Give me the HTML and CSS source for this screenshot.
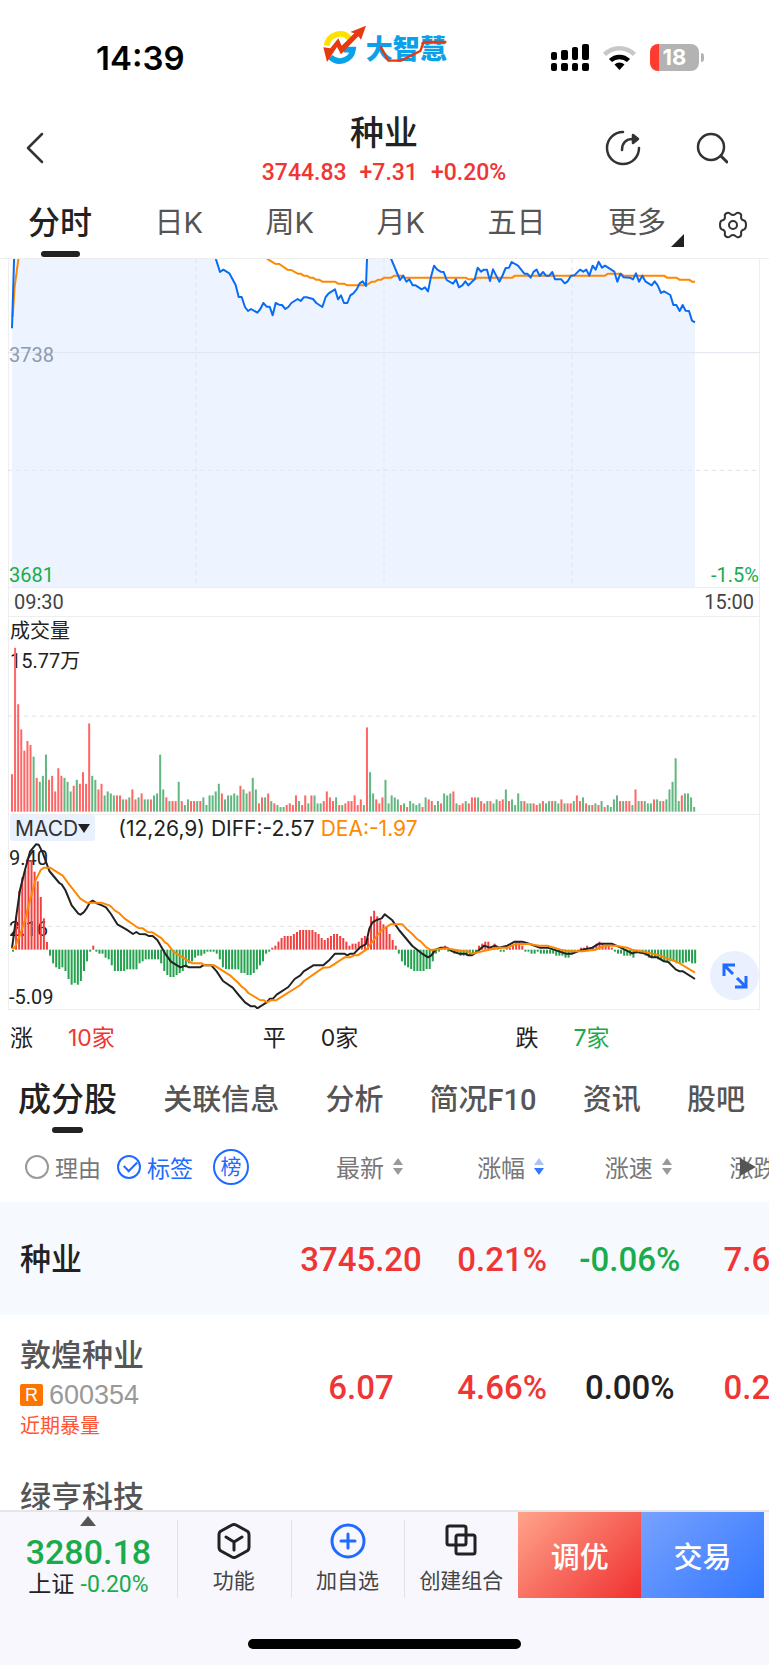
FILE: index.html
```html
<!DOCTYPE html>
<html lang="zh-CN">
<head>
  <meta charset="UTF-8">
  <meta name="viewport" content="width=device-width, initial-scale=1.0">
  <title>种业</title>
  <link rel="stylesheet" href="styles.css">
</head>
<body>
  <div class="app">
    <div class="status">
      <div class="status-time">14:39</div>
      <svg class="logo" viewBox="66 46 372 120" role="img" aria-label="大智慧">
        <path d="M77 108A40 40 0 0 1 146 86" fill="none" stroke="#ffe100" stroke-width="17"/>
        <path d="M88 142A40 40 0 0 0 156 120H128" fill="none" stroke="#0aa0ea" stroke-width="17"/>
        <path d="M67 113L88 116L112 86L122 108L160 71L148 67L195 48L180 90L172 80L120 134L108 112L78 157Z" fill="#e8380d"/>
        <text x="194" y="149" class="logo-text">大智慧</text>
        <path d="M238 110L262 153H300L358 124L368 97H436" fill="none" stroke="#e8380d" stroke-width="7"/>
      </svg>
      <div class="status-icons">
        <svg width="38" height="27" viewBox="0 0 38 27">
          <rect x="0" y="8" width="6" height="8" rx="2"/><rect x="10" y="6" width="7" height="10" rx="2"/>
          <rect x="21" y="3" width="6" height="13" rx="2"/><rect x="31" y="0" width="7" height="16" rx="2"/>
          <rect x="0" y="19" width="6" height="8" rx="2"/><rect x="10" y="19" width="7" height="8" rx="2"/>
          <rect x="21" y="19" width="6" height="8" rx="2"/><rect x="31" y="19" width="7" height="8" rx="2"/>
        </svg>
        <svg width="33" height="25" viewBox="0 0 33 25" fill="none" stroke-width="4.5">
          <path d="M1.500 9.500A21 21 0 0 1 31.500 9.500" stroke="#c8c8c8"/>
          <path d="M7.500 15.500A13 13 0 0 1 25.500 15.500" stroke="#000"/>
          <path d="M16.500 25L11.500 19.500A7.500 7.500 0 0 1 21.500 19.500Z" fill="#000"/>
        </svg>
        <div class="battery">18</div>
      </div>
    </div>

    <header class="header">
      <button class="icon-btn" aria-label="返回">
        <svg width="18" height="32" viewBox="0 0 18 32"><path d="M16 2L2 16L16 30"/></svg>
      </button>
      <div class="title">
        <h1>种业</h1>
        <div class="quote"><span>3744.83</span><span>+7.31</span><span>+0.20%</span></div>
      </div>
      <div class="header-actions">
        <button class="icon-btn" aria-label="分享">
          <svg width="36" height="36" viewBox="0 0 36 36">
            <path d="M18 2A16 16 0 1 0 34 18M17 20C17 13 21 9 28 9"/>
            <path d="M28 5L33 9L28 13Z" fill="#333"/>
          </svg>
        </button>
        <button class="icon-btn" aria-label="搜索">
          <svg width="32" height="32" viewBox="0 0 32 32"><circle cx="15" cy="15" r="13"/><path d="M25 24L31 30" stroke-width="3"/></svg>
        </button>
      </div>
    </header>

    <nav class="periods">
      <div class="period-list">
        <button class="period active">分时</button>
        <button class="period">日K</button>
        <button class="period">周K</button>
        <button class="period">月K</button>
        <button class="period">五日</button>
        <button class="period more">更多</button>
      </div>
      <button class="icon-btn" aria-label="设置">
        <svg class="gear" width="28" height="28" viewBox="0 0 28 28">
          <circle cx="14" cy="14" r="4"/>
          <path d="M8 2Q10 1 11.500 3Q14 5 16.500 3Q18 1 20 2Q23 3 22 6Q22 9 25 9.500Q27 10 27 14Q27 18 25 18.500Q22 19 22 22Q23 25 20 26Q18 27 16.500 25Q14 23 11.500 25Q10 27 8 26Q5 25 6 22Q6 19 3 18.500Q1 18 1 14Q1 10 3 9.500Q6 9 6 6Q5 3 8 2Z"/>
        </svg>
      </button>
    </nav>

    <main class="content">
      <section class="charts">
        <div class="chart price">
          <svg viewBox="24 27 2256 984" preserveAspectRatio="none" id="priceChart"></svg>
          <span class="label mid">3738</span>
          <span class="label low green">3681</span>
          <span class="label low right green">-1.5%</span>
        </div>
        <div class="times"><span>09:30</span><span>15:00</span></div>
        <div class="chart volume">
          <div class="volume-head"><div>成交量</div><div>15.77万</div></div>
          <svg viewBox="24 18 2256 594" preserveAspectRatio="none" id="volumeChart"></svg>
        </div>
        <div class="macd-head">
          <button class="indicator">MACD<i></i></button>
          <span>(12,26,9) DIFF:-2.57 <span class="orange">DEA:-1.97</span></span>
        </div>
        <div class="chart macd">
          <span class="label m-top">9.40</span>
          <span class="label m-mid">2.16</span>
          <span class="label m-low">-5.09</span>
          <svg viewBox="24 96 2256 501" preserveAspectRatio="none" id="macdChart"></svg>
          <button class="expand" aria-label="全屏">
            <svg width="26" height="26" viewBox="0 0 26 26"><path d="M11 11L2 2M2 13V2H13M15 15L24 24M24 13V24H13"/></svg>
          </button>
        </div>
      </section>

      <section class="counts">
        <div>涨<span class="red">10家</span></div>
        <div>平<span>0家</span></div>
        <div>跌<span class="green">7家</span></div>
      </section>

      <nav class="tabs">
        <a href="#" class="active">成分股</a>
        <a href="#">关联信息</a>
        <a href="#">分析</a>
        <a href="#">简况F10</a>
        <a href="#">资讯</a>
        <a href="#">股吧</a>
      </nav>

      <table class="stocks">
        <colgroup><col class="c-name"><col class="c-last"><col class="c-pct"><col class="c-speed"><col></colgroup>
        <thead>
          <tr>
            <th>
              <div class="filters">
                <label><input type="checkbox">理由</label>
                <label class="on"><input type="checkbox" checked>标签</label>
                <button class="rank">榜</button>
              </div>
            </th>
            <th><button class="sort">最新<i></i></button></th>
            <th><button class="sort desc">涨幅<i></i></button></th>
            <th><button class="sort">涨速<i></i></button></th>
            <th class="last"><button class="sort">涨跌</button><span class="next"></span></th>
          </tr>
        </thead>
        <tbody>
          <tr class="sector">
            <td class="name">种业</td>
            <td class="red">3745.20</td>
            <td class="red">0.21%</td>
            <td class="green">-0.06%</td>
            <td class="last red">7.6</td>
          </tr>
          <tr>
            <td class="name">
              敦煌种业
              <div class="code"><b>R</b>600354</div>
              <div class="tag">近期暴量</div>
            </td>
            <td class="red">6.07</td>
            <td class="red">4.66%</td>
            <td>0.00%</td>
            <td class="last red">0.2</td>
          </tr>
          <tr>
            <td class="name">
              绿亨科技
              <div class="code"></div>
              <div class="tag"></div>
            </td>
            <td></td>
            <td></td>
            <td></td>
            <td></td>
          </tr>
        </tbody>
      </table>
    </main>

    <footer class="footer">
      <div class="bar">
        <button class="index">
          <i class="up"></i>
          <strong>3280.18</strong>
          <span>上证 <em>-0.20%</em></span>
        </button>
        <button class="tool">
          <svg width="36" height="36" viewBox="0 0 36 36"><path d="M16 2Q18 1 20 2L31 8Q33 9 33 12V24Q33 27 31 28L20 34Q18 35 16 34L5 28Q3 27 3 24V12Q3 9 5 8ZM10 14L18 19L26 14M18 19V27"/></svg>
          功能
        </button>
        <button class="tool">
          <svg class="blue" width="36" height="36" viewBox="0 0 36 36"><circle cx="18" cy="18" r="16"/><path d="M18 11V25M11 18H25"/></svg>
          加自选
        </button>
        <button class="tool">
          <svg width="36" height="36" viewBox="0 0 36 36"><rect x="4" y="3" width="19" height="19" rx="2"/><rect x="13" y="12" width="19" height="19" rx="2"/></svg>
          创建组合
        </button>
        <button class="cta tune">调优</button>
        <button class="cta trade">交易</button>
      </div>
      <div class="home"></div>
    </footer>
  </div>
  <script src="charts.js"></script>
</body>
</html>
```

FILE: styles.css
```css
* {
  box-sizing: border-box;
}
body {
  margin: 0;
  background: #fff;
  color: #222;
  font-family: "Inter", "Noto Sans CJK SC", sans-serif;
}
button {
  margin: 0;
  padding: 0;
  border: 0;
  background: none;
  color: inherit;
  font: inherit;
}
a {
  color: inherit;
  text-decoration: none;
}
svg {
  display: block;
}
.red {
  color: #f03535;
}
.green {
  color: #1aab4b;
}
.orange {
  color: #ff8800;
}
.app {
  display: flex;
  flex-direction: column;
  height: 100vh;
  overflow: hidden;
}

/* status bar */
.status {
  display: grid;
  grid-template-columns: 1fr auto 1fr;
  flex: none;
  height: 100px;
  padding: 25px 64px 0 96px;
}
.status-time {
  padding-top: 13px;
  color: #000;
  font-size: 33px;
  line-height: 40px;
  font-weight: 600;
}
.logo {
  width: 124px;
  height: 40px;
  margin-right: 32px;
}
.logo-text {
  fill: #0aa0ea;
  font-size: 81px;
  font-weight: 900;
}
.status-icons {
  display: flex;
  align-items: center;
  justify-content: flex-end;
  gap: 14px;
  height: 64px;
}
.battery {
  position: relative;
  width: 49px;
  height: 27px;
  margin-right: 6px;
  border-radius: 8px;
  background: linear-gradient(90deg, #ff3b30 9px, #b3b3b3 9px);
  color: #fff;
  font-size: 22px;
  line-height: 27px;
  font-weight: 700;
  text-align: center;
}
.battery::after {
  content: "";
  position: absolute;
  top: 9px;
  right: -5px;
  width: 3px;
  height: 9px;
  border-radius: 0 3px 3px 0;
  background: #b3b3b3;
}

/* header */
.header {
  display: grid;
  grid-template-columns: 1fr auto 1fr;
  align-items: center;
  flex: none;
  height: 96px;
  padding: 0 41px 0 26px;
}
.icon-btn svg {
  fill: none;
  stroke: #333;
  stroke-width: 2.5;
  stroke-linecap: round;
  stroke-linejoin: round;
}
.icon-btn .gear {
  stroke-width: 2;
}
.title {
  padding: 9px 0 0 14px;
  text-align: center;
}
.title h1 {
  margin: 0;
  font-size: 34px;
  line-height: 40px;
  font-weight: 500;
}
.quote {
  display: flex;
  gap: 13px;
  color: #f03535;
  font-family: Roboto, sans-serif;
  font-size: 23px;
  line-height: 40px;
  font-weight: 500;
}
.header-actions {
  display: flex;
  justify-content: flex-end;
  gap: 55px;
}

/* periods */
.periods {
  display: flex;
  align-items: center;
  flex: none;
  gap: 53px;
  height: 63px;
  padding: 0 22px 0 28px;
  border-bottom: 1px solid #eee;
}
.periods .icon-btn {
  padding-bottom: 4px;
}
.period-list {
  display: flex;
  flex: 1;
  justify-content: space-between;
}
.period {
  position: relative;
  height: 62px;
  padding-bottom: 8px;
  color: #555;
  font-size: 29px;
  line-height: 54px;
}
.period.active {
  color: #222;
  font-size: 32px;
  font-weight: 500;
}
.period.active::after {
  content: "";
  position: absolute;
  bottom: 1px;
  left: 13px;
  width: 39px;
  height: 6px;
  border-radius: 3px;
  background: #222;
}
.period.more::after {
  content: "";
  position: absolute;
  right: -18px;
  bottom: 11px;
  border-left: 13px solid transparent;
  border-bottom: 13px solid #222;
}

/* charts */
.content {
  flex: 1;
  min-height: 0;
  overflow: hidden;
}
.charts {
  margin: 0 9px 0 8px;
  border: 1px solid #eee;
  border-top: 0;
}
.chart {
  position: relative;
  border-bottom: 1px solid #eee;
}
.chart > svg {
  position: relative;
  width: calc(100% + 2px);
  height: 100%;
  margin-left: -1px;
}
.price {
  height: 329px;
}
.volume {
  height: 198px;
}
.macd {
  height: 167px;
  border-bottom: 0;
}
.label {
  position: absolute;
  left: 0;
  font-family: Roboto, sans-serif;
  font-size: 20px;
  line-height: 24px;
}
.mid {
  top: 84px;
  color: #8c9bb0;
}
.low {
  bottom: 0;
}
.right {
  left: auto;
  right: 0;
}
.times {
  display: flex;
  justify-content: space-between;
  padding: 0 5px;
  border-bottom: 1px solid #eee;
  color: #444;
  font-family: Roboto, sans-serif;
  font-size: 20px;
  line-height: 28px;
}
.volume-head {
  position: absolute;
  top: -1px;
  left: 1px;
  font-family: Roboto, "Noto Sans CJK SC", sans-serif;
  font-size: 20px;
  line-height: 30px;
}
.macd-head {
  display: flex;
  gap: 23px;
  height: 27px;
  padding-left: 1px;
  font-size: 21px;
  line-height: 27px;
}
.indicator {
  display: flex;
  align-items: center;
  height: 26px;
  padding: 0 5px;
  border-radius: 3px;
  background: #e9f0fe;
  color: #333;
}
.indicator i {
  border: 6px solid transparent;
  border-top: 9px solid #222;
  border-bottom: 0;
}
.m-top {
  top: 4px;
}
.m-mid {
  top: 75px;
}
.m-low {
  bottom: 0;
}
.expand {
  position: absolute;
  right: 0;
  bottom: 9px;
  display: grid;
  place-items: center;
  width: 49px;
  height: 49px;
  border-radius: 50%;
  background: #eaf0fe;
}
.expand svg {
  fill: none;
  stroke: #1f6bff;
  stroke-width: 3;
}

/* rise / flat / fall */
.counts {
  display: flex;
  padding-left: 10px;
  font-size: 23px;
  line-height: 56px;
}
.counts div {
  display: flex;
  gap: 35px;
  width: 33.3%;
}

/* tabs */
.tabs {
  display: flex;
  align-items: center;
  justify-content: space-between;
  height: 68px;
  padding: 0 24px 0 18px;
  color: #555;
  font-family: Roboto, "Noto Sans CJK SC", sans-serif;
  font-size: 29px;
  line-height: 68px;
  font-weight: 500;
}
.tabs .active {
  position: relative;
  color: #222;
  font-size: 33px;
}
.tabs .active::after {
  content: "";
  position: absolute;
  bottom: 1px;
  left: 34px;
  width: 31px;
  height: 6px;
  border-radius: 3px;
  background: #222;
}

/* stocks */
.stocks {
  width: 100%;
  border-collapse: collapse;
  table-layout: fixed;
}
.c-name {
  width: 37.7%;
}
.c-last {
  width: 18.5%;
}
.c-pct {
  width: 18.2%;
}
.c-speed {
  width: 15%;
}
.stocks th {
  height: 68px;
  padding: 0 0 3px 17px;
  color: #777;
  font-size: 24px;
  font-weight: 400;
  white-space: nowrap;
}
.stocks th:first-child {
  padding-left: 25px;
}
.filters {
  display: flex;
  align-items: center;
  font-size: 23px;
}
.filters label {
  display: flex;
  align-items: center;
  gap: 6px;
  margin-right: 16px;
}
.filters input {
  position: relative;
  width: 24px;
  height: 24px;
  margin: 0;
  border: 2px solid #999;
  border-radius: 50%;
  appearance: none;
}
.filters .on {
  margin-right: 20px;
  color: #1f6bff;
}
.filters input:checked {
  border-color: #1f6bff;
}
.filters input:checked::after {
  content: "";
  position: absolute;
  top: 4px;
  left: 5px;
  width: 11px;
  height: 6px;
  border: solid #1f6bff;
  border-width: 0 0 2px 2px;
  transform: rotate(-45deg);
}
.rank {
  width: 36px;
  height: 36px;
  border: 2px solid #1f6bff;
  border-radius: 50%;
  color: #1f6bff;
  font-size: 21px;
  line-height: 30px;
}
.sort {
  display: inline-flex;
  align-items: center;
  gap: 9px;
}
.sort i::before,
.sort i::after {
  content: "";
  display: block;
  border: 5px solid transparent;
}
.sort i::before {
  border-top: 0;
  border-bottom: 7px solid #999;
  margin-bottom: 3px;
}
.sort i::after {
  border-top: 7px solid #999;
  border-bottom: 0;
}
.sort.desc i::before {
  border-bottom-color: #a9c3f5;
}
.sort.desc i::after {
  border-top-color: #2f78ff;
}
.stocks th.last {
  position: relative;
  padding-left: 42px;
  overflow: hidden;
  text-align: left;
}
.next {
  position: absolute;
  top: 24px;
  left: 53px;
  border: 9px solid transparent;
  border-left: 16px solid #555;
  border-right: 0;
}
.stocks td {
  height: 142px;
  padding: 2px 0 0;
  font-family: Roboto, sans-serif;
  font-size: 33px;
  font-weight: 500;
  text-align: center;
}
.stocks .sector td {
  height: 113px;
  background: #f6faff;
}
.stocks td.last {
  padding-left: 36px;
  overflow: hidden;
  text-align: left;
}
.stocks td.name {
  padding: 0 0 0 20px;
  color: #555;
  font-family: "Inter", "Noto Sans CJK SC", sans-serif;
  font-size: 31px;
  line-height: 42px;
  text-align: left;
}
.stocks .sector td.name {
  color: #222;
}
.code {
  display: flex;
  align-items: center;
  gap: 6px;
  height: 38px;
  color: #999;
  font-family: "Liberation Sans", sans-serif;
  font-size: 27px;
  font-weight: 400;
}
.code b {
  width: 23px;
  height: 22px;
  border-radius: 2px;
  background: #ff7300;
  color: #fff;
  font-size: 18px;
  line-height: 22px;
  font-weight: 400;
  text-align: center;
}
.tag {
  height: 24px;
  color: #ff5533;
  font-size: 20px;
  line-height: 24px;
  font-weight: 400;
}

/* footer */
.footer {
  flex: none;
  height: 155px;
  border-top: 2px solid #e6e6e6;
  background: #f7f7fd;
}
.bar {
  display: flex;
  height: 86px;
  margin-right: 5px;
}
.index {
  display: flex;
  flex: 177;
  flex-direction: column;
  align-items: center;
  font-size: 23px;
  line-height: 28px;
}
.index .up {
  margin-top: 4px;
  border: 8px solid transparent;
  border-top: 0;
  border-bottom: 10px solid #555;
}
.index strong {
  margin-top: 8px;
  color: #1aab4b;
  font-family: Roboto, sans-serif;
  font-size: 34px;
  line-height: 36px;
  font-weight: 500;
}
.index em {
  color: #1aab4b;
  font-family: Roboto, sans-serif;
  font-size: 23px;
  font-style: normal;
}
.tool {
  position: relative;
  display: flex;
  flex: 114;
  flex-direction: column;
  align-items: center;
  gap: 5px;
  padding-top: 11px;
  color: #444;
  font-size: 21px;
  line-height: 34px;
  white-space: nowrap;
}
.tool::before {
  content: "";
  position: absolute;
  top: 8px;
  bottom: 0;
  left: 0;
  width: 1px;
  background: #e2e2e6;
}
.tool svg {
  fill: none;
  stroke: #222;
  stroke-width: 3;
  stroke-linecap: round;
  stroke-linejoin: round;
}
.tool svg.blue {
  stroke: #1f6bff;
}
.cta {
  flex: 123;
  color: #fff;
  font-size: 29px;
  font-weight: 500;
}
.tune {
  background: linear-gradient(135deg, #ffa48b, #f03030);
}
.trade {
  background: linear-gradient(135deg, #78a2ff, #3377ff);
}
.home {
  width: 273px;
  height: 10px;
  margin: 41px auto 0;
  border-radius: 5px;
  background: #000;
}

/* chart marks */
.grid {
  fill: none;
  stroke: #dfe4ee;
  stroke-width: 1;
  vector-effect: non-scaling-stroke;
}
.dash {
  stroke-dasharray: 4 4;
}
.line {
  fill: none;
  stroke-width: 2;
  stroke-linejoin: round;
  vector-effect: non-scaling-stroke;
}
.line.price-line {
  stroke: #0a6cf5;
}
.line.avg {
  stroke: #ff8800;
}
.line.diff {
  stroke: #222;
}
.area {
  fill: #eef4ff;
}
.bar-up {
  fill: #ff6666;
}
.bar-down {
  fill: #62b67f;
}
.hist-up {
  fill: #f24040;
}
.hist-down {
  fill: #22a24c;
}
```

FILE: charts.js
```js
const STEP = 9.26;

const price = '36,235 43,0 640,0 648,28 660,66 670,59 688,70 707,105 716,141 725,141 735,171 744,183 753,177 772,188 781,177 790,159 800,170 809,170 818,196 827,159 837,164 846,165 856,177 865,171 874,159 893,147 902,153 911,142 920,142 939,147 949,159 967,171 977,141 986,130 1005,118 1014,148 1023,136 1032,159 1042,159 1051,136 1060,130 1070,118 1079,100 1088,94 1098,108 1102,0 1160,0 1174,28 1200,90 1210,77 1219,95 1228,88 1238,106 1247,106 1265,118 1275,112 1284,124 1293,80 1302,47 1312,59 1322,65 1331,66 1340,90 1359,101 1368,88 1377,112 1387,106 1396,94 1405,106 1424,88 1433,53 1443,65 1452,59 1461,59 1470,93 1479,58 1498,95 1507,78 1517,54 1527,53 1535,36 1554,47 1573,71 1582,71 1592,83 1601,65 1610,59 1619,78 1629,66 1638,77 1648,77 1657,66 1665,88 1684,88 1694,100 1703,94 1713,77 1723,76 1740,59 1750,65 1759,59 1768,77 1778,47 1787,59 1796,35 1806,53 1815,47 1843,65 1852,95 1861,71 1871,82 1890,83 1899,88 1908,70 1917,95 1927,77 1936,94 1955,106 1964,94 1973,106 1983,129 1992,124 2011,135 2020,165 2029,165 2039,183 2048,165 2057,182 2067,183 2076,212 2085,217';
const average = '38,200 44,110 55,28 60,0 770,0 804,28 825,41 838,42 862,59 874,60 893,71 902,71 911,77 920,77 930,83 939,83 948,89 957,89 967,95 1005,95 1014,101 1032,101 1042,106 1098,106 1116,95 1125,95 1135,89 1144,89 1153,83 1174,83 1183,77 1207,77 1212,83 1397,83 1405,88 1424,88 1433,83 1537,83 1545,77 1815,77 1824,71 1862,71 1871,77 1992,77 2001,83 2029,83 2038,89 2067,89 2076,95 2085,95';

// positive = rise, negative = fall
const volumes = [
  113, 494, 324, 248, 184, 213, 201, -166, 102, -90, -108, -172, 96, 108, 61, 131, 108, -102, -90, -61,
  78, -96, 84, 119, 84, 266, -108, -96, 67, 84, -49, -61, -55, -49, 49, 49, -37, 37, -43, 67,
  37, -43, 55, -37, -37, 37, -49, -55, -172, -67, 43, -32, 32, 32, -90, 32, -20, -37, 32, 32,
  -32, 32, -43, -20, -49, -49, -61, -84, 55, -37, -49, -49, -55, -49, 78, -67, -55, 61, -102, -67,
  25, 43, -43, 55, -32, 25, -20, -14, -14, 20, 25, 20, 49, -32, 20, 49, -25, 49, -49, -25,
  -25, 32, 61, 43, 32, -43, 20, -20, 25, 32, 32, 49, 20, 37, -20, 254, -119, -55, 37, 25,
  43, -96, -25, -49, -43, -37, 20, -25, 14, -32, -25, -20, -25, 14, -43, 37, 32, -20, -32, 25,
  -55, -49, -55, 61, -25, 20, 25, -32, 25, 43, 43, -43, 32, 25, -32, 32, -25, -37, 32, 37,
  -67, 32, -37, -20, -55, -32, 32, -25, -25, 25, 20, -25, 32, -25, -32, 32, -32, -25, 37, -25,
  25, 25, -32, 49, 32, -43, 25, -20, 20, -25, 20, -32, 14, -20, -14, -37, -49, 32, -32, 32,
  32, -20, 67, -32, 32, -32, -25, -25, 37, -37, -32, 32, -37, -67, -90, -161, -32, 49, -55, -55,
  -43, -14
];

const hist = [
  -6, 99, 176, 217, 239, 269, 269, 234, 205, 158, 94, 23, -18, -41, -53, -58, -53, -64, -88, -105,
  -100, -105, -94, -64, -35, -6, 12, -6, -12, -12, -24, -29, -47, -64, -64, -64, -64, -59, -59, -59,
  -59, -41, -35, -29, -29, -29, -29, -29, -41, -64, -76, -82, -82, -76, -70, -64, -53, -41, -35, -24,
  -18, -18, -12, -6, -6, -6, -12, -29, -53, -58, -59, -59, -59, -59, -70, -70, -76, -76, -70, -59,
  -47, -35, -12, -6, 6, 12, 24, 35, 41, 41, 41, 47, 53, 59, 59, 59, 59, 59, 53, 47,
  35, 29, 35, 41, 47, 47, 41, 35, 24, 12, 18, 18, 24, 35, 41, 35, 100, 117, 100, 88,
  76, 70, 47, 29, 12, -12, -35, -47, -53, -58, -64, -64, -64, -64, -58, -58, -35, -12, -6, 6,
  12, -6, -6, -12, -12, -18, -18, -18, -15, -12, -12, 12, 18, 24, 24, 6, 18, 6, -6, -6,
  6, 6, 12, 24, 24, 12, -6, -6, -12, -12, -6, -12, -12, -12, -12, -12, -18, -18, -18, -24,
  -24, -12, -6, -6, 6, 6, 12, 3, 6, 18, 24, 18, 12, 12, 6, -6, -12, -12, -18, -18,
  -18, -24, -12, -12, -12, -18, -24, -24, -24, -29, -29, -35, -35, -35, -35, -41, -41, -41, -38, -35,
  -41, -41
];
const diff = '36,415 50,310 60,240 75,180 90,125 108,103 116,104 128,128 148,183 178,219 185,223 196,240 215,286 235,311 241,314 251,307 260,295 270,277 278,272 292,281 306,286 318,292 333,312 352,343 380,359 399,372 409,366 418,372 437,373 446,378 458,378 472,390 495,430 513,455 541,472 557,467 567,472 600,472 609,466 634,466 650,484 669,513 698,533 716,555 735,577 753,589 765,589 772,595 800,577 810,566 819,566 830,554 865,531 884,507 901,496 911,484 940,466 970,466 989,449 1005,431 1033,431 1042,436 1051,431 1062,431 1080,412 1098,402 1108,356 1117,338 1127,331 1145,325 1154,313 1177,331 1197,360 1237,408 1265,430 1284,442 1294,436 1307,419 1322,413 1340,413 1357,424 1377,431 1397,431 1405,436 1415,436 1433,424 1452,407 1469,413 1485,407 1497,413 1522,407 1544,395 1567,395 1587,401 1602,407 1619,413 1642,413 1662,419 1677,424 1697,431 1717,431 1747,419 1777,413 1797,401 1835,401 1862,413 1897,430 1912,425 1937,431 1955,442 1972,442 1992,454 2005,456 2027,478 2039,484 2049,484 2085,507';
const dea = '36,415 44,413 60,375 75,330 90,270 105,215 122,180 131,173 150,173 188,197 205,220 241,266 260,278 304,278 330,287 345,302 357,309 374,326 415,354 428,355 443,366 457,367 485,385 495,397 503,402 520,425 577,460 605,460 615,466 643,466 690,496 715,519 725,530 735,537 745,549 780,570 792,571 802,577 812,571 828,571 901,525 912,513 970,473 988,472 1034,442 1050,442 1062,436 1073,436 1100,418 1126,384 1145,360 1172,343 1207,343 1219,356 1237,372 1251,387 1262,394 1279,412 1293,420 1340,415 1367,420 1387,424 1404,424 1415,431 1447,424 1467,419 1492,413 1522,413 1547,402 1587,402 1617,407 1642,407 1682,419 1707,424 1747,424 1787,419 1812,407 1847,407 1882,413 1897,420 1932,425 1957,431 1977,436 2032,456 2085,488';

const hline = (y, cls) => `<path class="grid ${cls}" d="M24 ${y}H2280"/>`;
const vline = x => `<path class="grid dash" d="M${x} 27V1011"/>`;
const line = (points, cls) => `<polyline class="line ${cls}" points="${points}"/>`;

function bars(data, start, base, width, name) {
  return data.map((v, i) => {
    const y = name === 'hist' && v < 0 ? base : base - Math.abs(v);
    const cls = name + (v > 0 ? '-up' : '-down');
    return `<rect class="${cls}" x="${start + i * STEP}" y="${y}" width="${width}" height="${Math.abs(v)}"/>`;
  }).join('');
}

document.querySelector('#priceChart').innerHTML =
  `<polygon class="area" points="36,1011 ${price} 2085,1011"/>` +
  hline(308, '') + hline(661, 'dash') + vline(588) + vline(1152) + vline(1716) +
  line(average, 'avg') + line(price, 'price-line');

document.querySelector('#volumeChart').innerHTML =
  hline(317, 'dash') + bars(volumes, 33, 605, 6, 'bar');

document.querySelector('#macdChart').innerHTML =
  hline(349, 'dash') + bars(hist, 36, 419, 6, 'hist') + line(diff, 'diff') + line(dea, 'avg');
```
